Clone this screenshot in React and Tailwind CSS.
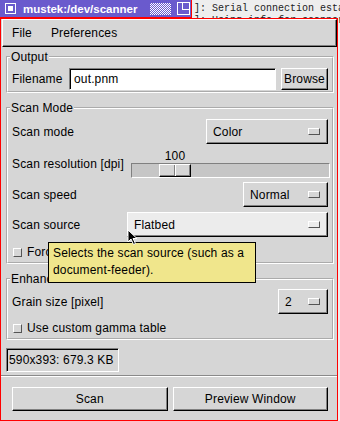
const raised =
  "border border-t-white border-l-white border-r-black border-b-black shadow-[inset_-1px_-1px_0_#808080]";
const sunken =
  "border border-t-[#808080] border-l-[#808080] border-r-white border-b-white";

function Indicator() {
  return (
    <span className="w-[12px] h-[7px] border border-t-white border-l-white border-r-[#555] border-b-[#555]" />
  );
}

function OptionMenu({ value, width, hover }) {
  return (
    <div
      className={`${raised} ${width} h-[25px] flex items-center justify-between pl-[6px] pr-[7px] ${
        hover ? "bg-[#ececec]" : "bg-[#d6d6d6]"
      }`}
    >
      <span>{value}</span>
      <Indicator />
    </div>
  );
}

function Check({ label }) {
  return (
    <div className="h-[20px] flex items-center gap-[5px] pl-[1px]">
      <span className="w-[9px] h-[9px] border border-t-white border-l-white border-r-[#555] border-b-[#555]" />
      <span>{label}</span>
    </div>
  );
}

function Group({ title, className, children }) {
  return (
    <fieldset
      className={`w-[328px] border-2 [border-style:groove] border-white px-[4px] ${className}`}
    >
      <legend className="-ml-[2px] px-[1px] leading-[14px]">{title}</legend>
      {children}
    </fieldset>
  );
}

export default function App() {
  return (
    <div className="relative w-[340px] h-[421px] overflow-hidden bg-[#eeeeee] font-['Liberation_Sans',Arial,sans-serif] text-[12px] tracking-[0.15px] text-black">
      {/* title bar + terminal behind */}
      <div className="flex h-[18px]">
        <div className="w-[192px] h-[18px] shrink-0 bg-[#6a5acd] border-r border-b border-[#ff0000] flex items-center text-white">
          <span className="ml-[5px] w-[11px] h-[11px] border border-white flex items-center justify-center">
            <span className="w-[5px] h-[5px] bg-white" />
          </span>
          <span className="ml-[7px] font-bold text-[11.5px] tracking-normal leading-[14px]">
            mustek:/dev/scanner
          </span>
          <span className="ml-[13px] w-[21px] h-[12px] bg-[repeating-conic-gradient(#ffffff_0_25%,#6a5acd_0_50%)] bg-[length:2px_2px]" />
          <span className="ml-[6px] w-[13px] h-[13px] border border-white flex justify-end">
            <span className="w-[7px] h-[7px] border-l border-b border-white" />
          </span>
        </div>
        <div className="pl-[2px] pt-[3px] font-['Liberation_Mono',monospace] text-[10px] leading-[12px] tracking-normal text-[#222] whitespace-pre">
          <div>]: Serial connection esta</div>
          <div>]: Using info for scanner</div>
        </div>
      </div>

      {/* main window */}
      <div className="relative w-[338px] h-[403px] border border-[#ff0000] bg-[#d6d6d6] flex flex-col">
        <div className={`${raised} ml-[1px] h-[28px] flex items-center gap-[19px] pl-[9px]`}>
          <span>File</span>
          <span>Preferences</span>
        </div>

        <div className="pl-[5px] flex flex-col">
          <Group title="Output" className="mt-[3px]">
            <div className="mt-[3px] h-[24px] flex items-center">
              <span className="w-[57px]">Filename</span>
              <div className={`${sunken} shadow-[inset_1px_1px_0_#000] w-[207px] h-[22px] bg-white flex items-center pl-[4px]`}>
                out.pnm
              </div>
              <div className={`${raised} ml-[5px] w-[47px] h-[22px] flex items-center justify-center`}>
                Browse
              </div>
            </div>
          </Group>

          <Group title="Scan Mode" className="mt-[8px]">
            <div className="mt-[4px] flex items-center justify-between">
              <span>Scan mode</span>
              <OptionMenu value="Color" width="w-[122px]" />
            </div>
            <div className="mt-[5px] h-[29px] flex items-center justify-between">
              <span>Scan resolution [dpi]</span>
              <div className="w-[199px] -mr-[2px] flex flex-col">
                <div className="ml-[28px] w-[32px] h-[14px] leading-[14px] text-center">100</div>
                <div className={`${sunken} h-[15px] bg-[#c6c6c6] flex items-center`}>
                  <div className={`${raised} ml-[27px] w-[32px] h-[13px] bg-[#d6d6d6] flex justify-center`}>
                    <span className="w-[2px] h-full border-l border-l-[#808080] border-r border-r-white" />
                  </div>
                </div>
              </div>
            </div>
            <div className="mt-[4px] flex items-center justify-between">
              <span>Scan speed</span>
              <OptionMenu value="Normal" width="w-[85px]" />
            </div>
            <div className="mt-[5px] flex items-center justify-between">
              <span>Scan source</span>
              <OptionMenu value="Flatbed" width="w-[201px]" hover />
            </div>
            <div className="mt-[5px]">
              <Check label="Force backtracking" />
            </div>
          </Group>

          <Group title="Enhancement" className="mt-[8px]">
            <div className="mt-[3px] flex items-center justify-between">
              <span>Grain size [pixel]</span>
              <OptionMenu value="2" width="w-[50px]" />
            </div>
            <div className="mt-[4px]">
              <Check label="Use custom gamma table" />
            </div>
          </Group>

          <div className={`${sunken} shadow-[inset_1px_1px_0_#000] mt-[8px] w-[113px] h-[24px] flex items-center pl-[2px]`}>
            590x393: 679.3 KB
          </div>
        </div>

        <div className="mt-[3px] h-[2px] border-t border-t-[#8a8a8a] border-b border-b-white" />

        <div className="mt-[10px] pl-[11px] pr-[9px] flex gap-[5px]">
          <div className={`${raised} flex-1 h-[24px] flex items-center justify-center`}>Scan</div>
          <div className={`${raised} flex-1 h-[24px] flex items-center justify-center`}>Preview Window</div>
        </div>
      </div>

      {/* tooltip */}
      <div className="absolute left-[48px] top-[242px] w-[208px] h-[41px] bg-[#f0e68c] border border-black pl-[4px] pt-[2px] leading-[17px]">
        <div>Selects the scan source (such as a</div>
        <div>document-feeder).</div>
      </div>

      {/* mouse pointer */}
      <svg className="absolute left-[127px] top-[229px]" width="12" height="18" viewBox="0 0 12 18">
        <path d="M1 1 L1 13 L4 10 L6.5 15.5 L8.5 14.5 L6 9.5 L10 9.5 Z" fill="#000" stroke="#fff" strokeWidth="1" />
      </svg>
    </div>
  );
}
